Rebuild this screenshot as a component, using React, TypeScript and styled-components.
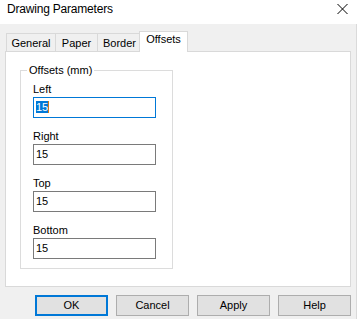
import React from "react";
import styled, { createGlobalStyle, css } from "styled-components";

const Global = createGlobalStyle`
  html, body { margin: 0; padding: 0; background: #f0f0f0; }
  body { font-family: "Liberation Sans", Arial, sans-serif; color: #000; }
`;

const Window = styled.div`
  width: 357px;
  height: 319px;
  display: flex;
  flex-direction: column;
  background: #f0f0f0;
  overflow: hidden;
`;

const TitleBar = styled.div`
  box-sizing: border-box;
  height: 24px;
  flex: none;
  background: #fff;
  display: flex;
  justify-content: space-between;
  align-items: flex-start;
  padding: 2px 9px 0 7px;
  font-size: 12px;
  line-height: 14px;
  letter-spacing: -0.2px;
`;

const CloseIcon = styled.svg`
  margin-top: 2px;
  display: block;
`;

const Body = styled.div`
  flex: 1;
  display: flex;
  flex-direction: column;
  border-right: 1px solid #dadada;
`;

const TabStrip = styled.div`
  display: flex;
  align-items: flex-start;
  height: 20px;
  margin-top: 7px;
  padding-left: 6px;
  position: relative;
  z-index: 1;
`;

const Tab = styled.div<{ $w: number; $active?: boolean }>`
  box-sizing: border-box;
  flex: none;
  width: ${(p) => p.$w}px;
  border: 1px solid #d9d9d9;
  border-bottom: none;
  margin-right: -1px;
  font-size: 11px;
  line-height: 13px;
  text-align: center;
  white-space: nowrap;
  ${(p) =>
    p.$active
      ? css`
          height: 21px;
          margin-left: -2px;
          background: #fff;
          padding-top: 1px;
          position: relative;
          z-index: 1;
        `
      : css`
          height: 18px;
          margin-top: 2px;
          background: #f0f0f0;
          padding-top: 3px;
        `}
`;

const Panel = styled.div`
  box-sizing: border-box;
  margin-left: 5px;
  width: 346px;
  height: 236px;
  border: 1px solid #d9d9d9;
  background: #fff;
  padding: 12px 0 0 14px;
`;

const GroupBox = styled.fieldset`
  box-sizing: border-box;
  width: 153px;
  min-width: 0;
  margin: 0;
  padding: 6px 0 9px 12px;
  border: 1px solid #dcdcdc;
  display: flex;
  flex-direction: column;
  gap: 12px;
`;

const Legend = styled.legend`
  font-size: 11px;
  line-height: 13px;
  padding: 0 2px;
  margin-left: -6px;
`;

const Field = styled.div`
  display: flex;
  flex-direction: column;
  gap: 1px;
`;

const FieldLabel = styled.label`
  font-size: 11px;
  line-height: 13px;
`;

const TextBox = styled.div<{ $focused?: boolean }>`
  box-sizing: border-box;
  width: 123px;
  height: 21px;
  border: 1px solid ${(p) => (p.$focused ? "#0078d7" : "#7a7a7a")};
  background: #fff;
  padding: 3px 0 0 2px;
  font-size: 11px;
  line-height: 12px;
  display: flex;
  align-items: flex-start;
`;

const Selection = styled.span`
  background: #0078d7;
  color: #fff;
`;

const Caret = styled.span`
  width: 1px;
  height: 12px;
  background: #d07a1a;
`;

const ButtonRow = styled.div`
  display: flex;
  justify-content: flex-end;
  gap: 8px;
  margin-top: 8px;
  padding-right: 5px;
`;

const Button = styled.button<{ $default?: boolean }>`
  box-sizing: border-box;
  width: 73px;
  height: 21px;
  margin: 0;
  padding: 0;
  background: #e1e1e1;
  border: ${(p) => (p.$default ? "2px solid #0078d7" : "1px solid #adadad")};
  font-family: inherit;
  font-size: 11px;
  line-height: 13px;
  color: #000;
`;

const fields = [
  { label: "Left", value: "15", focused: true },
  { label: "Right", value: "15" },
  { label: "Top", value: "15" },
  { label: "Bottom", value: "15" },
];

const tabs = [
  { name: "General", w: 50 },
  { name: "Paper", w: 43 },
  { name: "Border", w: 45 },
  { name: "Offsets", w: 49, active: true },
];

export default function App() {
  return (
    <>
      <Global />
      <Window>
        <TitleBar>
          <span>Drawing Parameters</span>
          <CloseIcon width="11" height="10" viewBox="0 0 11 10">
            <path d="M0.5 0 L10.5 10 M10.5 0 L0.5 10" stroke="#000" strokeWidth="1" fill="none" />
          </CloseIcon>
        </TitleBar>
        <Body>
          <TabStrip>
            {tabs.map((t) => (
              <Tab key={t.name} $w={t.w} $active={t.active}>
                {t.name}
              </Tab>
            ))}
          </TabStrip>
          <Panel>
            <GroupBox>
              <Legend>Offsets (mm)</Legend>
              {fields.map((f) => (
                <Field key={f.label}>
                  <FieldLabel>{f.label}</FieldLabel>
                  <TextBox $focused={f.focused}>
                    {f.focused ? (
                      <>
                        <Selection>{f.value}</Selection>
                        <Caret />
                      </>
                    ) : (
                      f.value
                    )}
                  </TextBox>
                </Field>
              ))}
            </GroupBox>
          </Panel>
          <ButtonRow>
            <Button $default>OK</Button>
            <Button>Cancel</Button>
            <Button>Apply</Button>
            <Button>Help</Button>
          </ButtonRow>
        </Body>
      </Window>
    </>
  );
}
